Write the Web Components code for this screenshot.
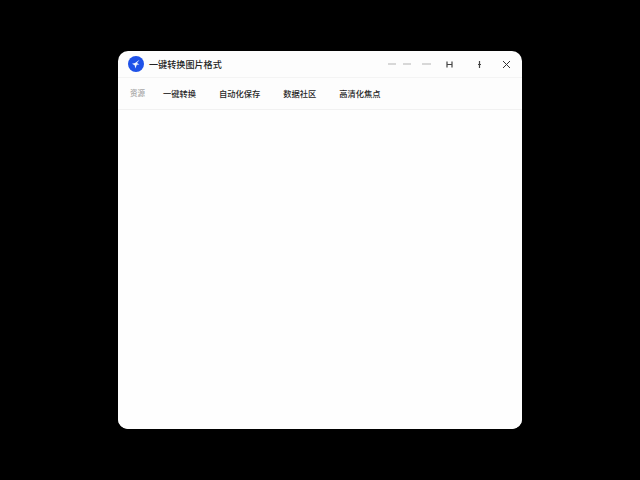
<!DOCTYPE html>
<html lang="zh">
<head>
<meta charset="utf-8">
<title>一键转换图片格式</title>
<style>
html, body { margin: 0; height: 100%; background: #000; }
body { padding: 51px 118px; box-sizing: border-box; font-family: "Noto Sans CJK SC", "Liberation Sans", sans-serif; }
</style>
</head>
<body>
<app-window>
  <title-bar slot="title" heading="一键转换图片格式"></title-bar>
  <nav-bar slot="nav">
    <nav-item muted>资源</nav-item>
    <nav-item>一键转换</nav-item>
    <nav-item>自动化保存</nav-item>
    <nav-item>数据社区</nav-item>
    <nav-item>高清化焦点</nav-item>
  </nav-bar>
</app-window>
<script>
class appWindow extends HTMLElement {
    constructor() {
        super();
        this.attachShadow({mode: 'open'});
        this.shadowRoot.innerHTML = `
            <style>
                :host {
                    display: flex;
                    flex-direction: column;
                    width: 404px;
                    height: 378px;
                    background: #fdfdfd;
                    border-radius: 10px;
                    overflow: hidden;
                }
                .content { flex: 1; background: #fefefe; }
            </style>
            <slot name="title"></slot>
            <slot name="nav"></slot>
            <div class="content"></div>
        `;
    }
}

class titleBar extends HTMLElement {
    constructor() {
        super();
        this.attachShadow({mode: 'open'});
    }

    connectedCallback() {
        this.shadowRoot.innerHTML = `
            <style>
                :host {
                    display: flex;
                    align-items: center;
                    height: 26px;
                    padding: 0 11px 0 10px;
                    border-bottom: 1px solid #f4f4f4;
                    color: #222;
                }
                .logo {
                    width: 16px;
                    height: 16px;
                    margin-right: 5px;
                    flex: none;
                }
                h1 {
                    margin: 0;
                    font-size: 9.1px;
                    line-height: 12px;
                    font-weight: 500;
                    white-space: nowrap;
                }
                .controls {
                    margin-left: auto;
                    display: flex;
                    align-items: center;
                }
                .dash { width: 8px; height: 2px; background: #d8d8d8; margin-right: 7px; }
                .dash.mid { margin-right: 11px; }
                .dash.last { width: 9px; margin-right: 15px; }
                svg.ctl { display: block; width: 7px; height: 9px; fill: none; stroke: #444; stroke-width: 1.2; }
                svg.pin { margin-right: 23px; }
                svg.fold { margin-right: 19px; }
                svg.close { width: 9px; stroke: #333; stroke-width: 1; }
            </style>
            <svg class="logo" viewBox="0 0 16 16">
                <circle cx="8" cy="8" r="8" fill="#1f52e8"/>
                <path d="M11.6 3.8 9 7 11.4 8.6 8.8 8.8 7.4 12.6 6.6 9.2 4 7.8 7 7z" fill="#f0f4ff"/>
            </svg>
            <h1>${this.getAttribute('heading')}</h1>
            <div class="controls">
                <span class="dash"></span>
                <span class="dash mid"></span>
                <span class="dash last"></span>
                <svg class="ctl pin" viewBox="0 0 7 9"><path d="M1 1.5v6M6 1.5v6M1 4.5h5"/></svg>
                <svg class="ctl fold" viewBox="0 0 7 9"><path d="M3.5 1v7M2 4.5h3"/></svg>
                <svg class="ctl close" viewBox="0 0 9 9"><path d="M1 1l7 7M8 1l-7 7"/></svg>
            </div>
        `;
    }
}

class navBar extends HTMLElement {
    constructor() {
        super();
        this.attachShadow({mode: 'open'});
        this.shadowRoot.innerHTML = `
            <style>
                :host {
                    display: flex;
                    align-items: center;
                    gap: 23px;
                    height: 29px;
                    padding: 0 12px 2px;
                    border-bottom: 1px solid #f1f1f1;
                }
            </style>
            <slot></slot>
        `;
    }
}

class navItem extends HTMLElement {
    constructor() {
        super();
        this.attachShadow({mode: 'open'});
        this.shadowRoot.innerHTML = `
            <style>
                :host {
                    display: block;
                    font-size: 8.25px;
                    line-height: 12px;
                    font-weight: 500;
                    color: #262626;
                    white-space: nowrap;
                }
                :host([muted]) {
                    color: #a8a8a8;
                    font-size: 7.5px;
                    margin-right: -5px;
                }
            </style>
            <slot></slot>
        `;
    }
}

customElements.define('app-window', appWindow);
customElements.define('title-bar', titleBar);
customElements.define('nav-bar', navBar);
customElements.define('nav-item', navItem);
</script>
</body>
</html>
